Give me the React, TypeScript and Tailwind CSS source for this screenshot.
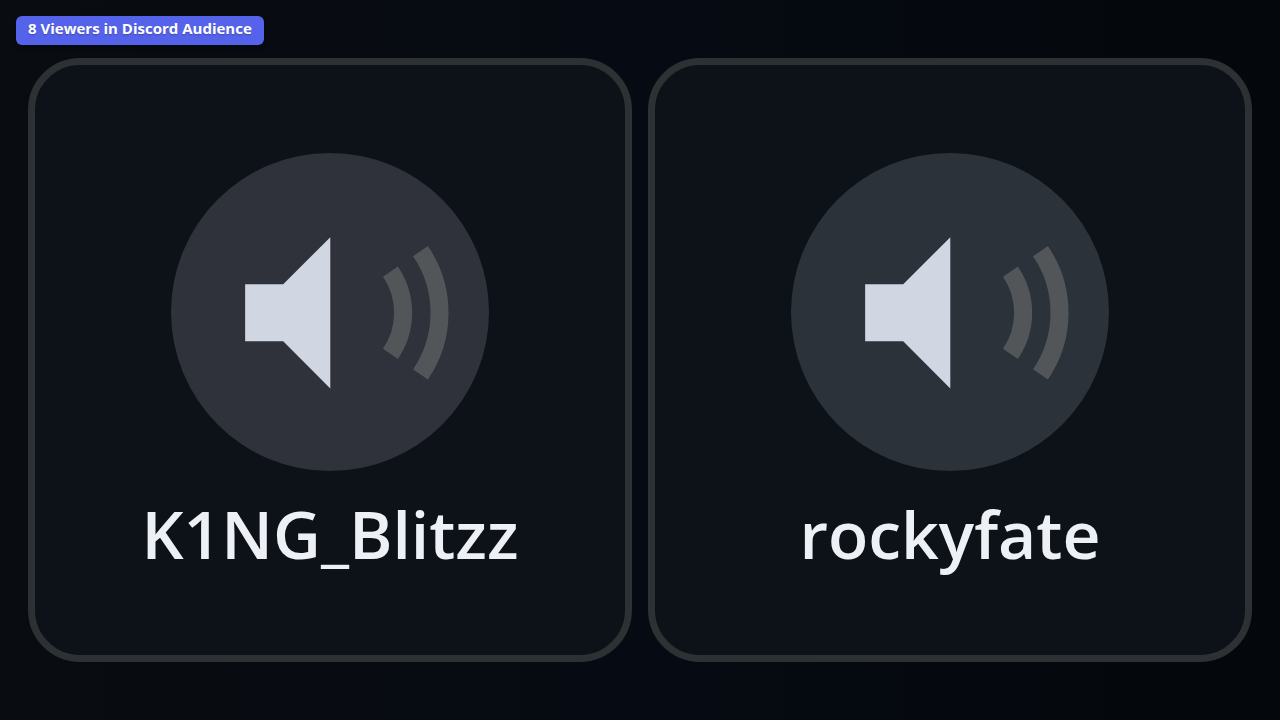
import React from "react";

type Speaker = {
  name: string;
  avatarClass: string;
};

const speakers: Speaker[] = [
  { name: "K1NG_Blitzz", avatarClass: "bg-[#2f313b]" },
  { name: "rockyfate", avatarClass: "bg-[#2b3239]" },
];

const SpeakerIcon: React.FC = () => {
  return (
    <svg viewBox="0 0 318 318" className="h-full w-full" aria-hidden="true">
      <path d="M74 131h38l47-47v151L112 188H74z" fill="#d0d7e3" />
      <g fill="none" stroke="#525659" strokeWidth="18">
        <path d="M219 118.5A72.5 72.5 0 0 1 219 200.5" />
        <path d="M249 98A109 109 0 0 1 249 221" />
      </g>
    </svg>
  );
};

const SpeakerCard: React.FC<{ speaker: Speaker }> = ({ speaker }) => {
  return (
    <li className="flex aspect-square flex-col items-center justify-center rounded-[52px] border-7 border-[#2d3134] bg-[#0d1218]">
      <div
        className={`aspect-square w-[54%] overflow-hidden rounded-full ${speaker.avatarClass}`}
      >
        <SpeakerIcon />
      </div>
      <h2 className="mt-7 text-[66px] leading-17 font-semibold text-[#edf1f6]">
        {speaker.name}
      </h2>
    </li>
  );
};

const App: React.FC = () => {
  return (
    <main className="relative flex min-h-screen items-center bg-linear-to-r from-[#090d11] via-[#060a12] to-[#04080c] px-7 font-['Open_Sans','Noto_Sans',sans-serif]">
      <p className="absolute top-4 left-4 rounded-md bg-[#5562ea] px-3 pt-0.5 pb-1.5 text-[15px] leading-[21px] font-bold text-white shadow-md text-shadow-sm">
        8 Viewers in Discord Audience
      </p>
      <ul className="grid w-full grid-cols-2 gap-4">
        {speakers.map((speaker) => (
          <SpeakerCard key={speaker.name} speaker={speaker} />
        ))}
      </ul>
    </main>
  );
};

export default App;
